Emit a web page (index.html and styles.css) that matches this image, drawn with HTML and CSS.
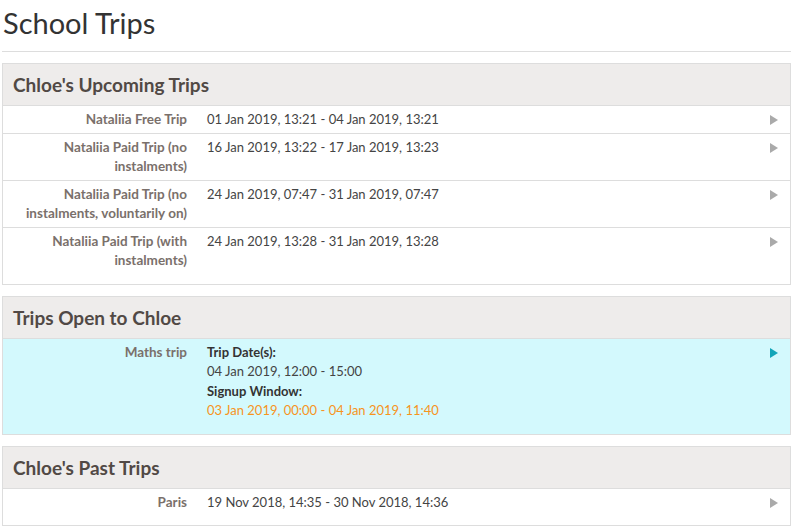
FILE: index.html
```html
<!DOCTYPE html>
<html lang="en">
<head>
  <meta charset="UTF-8" />
  <title>School Trips</title>
  <link rel="stylesheet" href="styles.css">
</head>
<body>

  <h1>School Trips</h1>

  <div class="panel">
    <h2>Chloe's Upcoming Trips</h2>
    <div class="panel-body">
      <div class="trip">
        <div class="trip-name">Nataliia Free Trip</div>
        <div class="trip-info">01 Jan 2019, 13:21 - 04 Jan 2019, 13:21</div>
        <span class="arrow"></span>
      </div>
      <div class="trip">
        <div class="trip-name">Nataliia Paid Trip (no instalments)</div>
        <div class="trip-info">16 Jan 2019, 13:22 - 17 Jan 2019, 13:23</div>
        <span class="arrow"></span>
      </div>
      <div class="trip">
        <div class="trip-name">Nataliia Paid Trip (no instalments, voluntarily on)</div>
        <div class="trip-info">24 Jan 2019, 07:47 - 31 Jan 2019, 07:47</div>
        <span class="arrow"></span>
      </div>
      <div class="trip">
        <div class="trip-name">Nataliia Paid Trip (with instalments)</div>
        <div class="trip-info">24 Jan 2019, 13:28 - 31 Jan 2019, 13:28</div>
        <span class="arrow"></span>
      </div>
    </div>
  </div>

  <div class="panel">
    <h2>Trips Open to Chloe</h2>
    <div class="panel-body open">
      <div class="trip">
        <div class="trip-name">Maths trip</div>
        <div class="trip-info">
          <b>Trip Date(s):</b><br>
          04 Jan 2019, 12:00 - 15:00<br>
          <b>Signup Window:</b><br>
          <span class="signup">03 Jan 2019, 00:00 - 04 Jan 2019, 11:40</span>
        </div>
        <span class="arrow"></span>
      </div>
    </div>
  </div>

  <div class="panel">
    <h2>Chloe's Past Trips</h2>
    <div class="panel-body">
      <div class="trip">
        <div class="trip-name">Paris</div>
        <div class="trip-info">19 Nov 2018, 14:35 - 30 Nov 2018, 14:36</div>
        <span class="arrow"></span>
      </div>
    </div>
  </div>

</body>
</html>
```

FILE: styles.css
```css
body {
  margin: 0;
  padding: 0 6px 0 2px;
  font-family: Lato, "Open Sans", sans-serif;
  color: #444;
  background: #fff;
}

h1 {
  margin: 0;
  padding: 5px 0 0 1px;
  height: 46px;
  font-size: 29px;
  font-weight: 400;
  color: #333;
  border-bottom: 1px solid #ddd;
}

.panel {
  margin-top: 11px;
  border: 1px solid #ddd;
}

.panel h2 {
  margin: 0;
  padding: 0 10px;
  height: 41px;
  line-height: 42px;
  font-size: 19px;
  font-weight: 700;
  color: #514945;
  background: #eeeceb;
  border-bottom: 1px solid #ddd;
}

.panel-body {
  padding-bottom: 10px;
}

.panel-body.open {
  background: #d3f9fd;
}

.trip {
  display: flex;
  align-items: flex-start;
  padding: 4px 12px 3px 0;
  font-size: 13px;
  line-height: 19.5px;
  border-bottom: 1px solid #ddd;
}

.trip:last-child {
  border-bottom: none;
}

.trip-name {
  width: 168px;
  padding-left: 16px;
  flex: none;
  text-align: right;
  font-weight: 700;
  font-size: 13.5px;
  color: #7a706b;
}

.trip-info {
  flex: 1;
  padding-left: 20px;
}

.trip-info b {
  color: #333;
}

.signup {
  color: #f7941d;
}

.arrow {
  flex: none;
  width: 0;
  height: 0;
  margin-top: 5px;
  border-top: 5px solid transparent;
  border-bottom: 5px solid transparent;
  border-left: 8px solid #aaa;
}

.open .arrow {
  border-left-color: #12a5b8;
}
```
